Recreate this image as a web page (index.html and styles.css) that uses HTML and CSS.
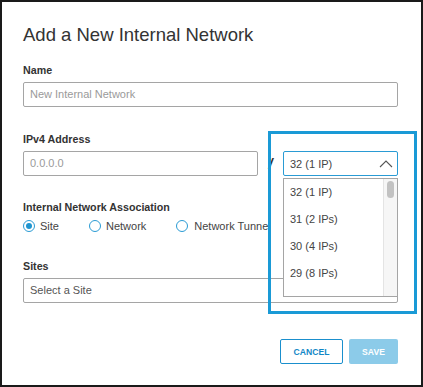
FILE: index.html
```html
<!DOCTYPE html>
<html lang="en">

<head>
    <meta charset="UTF-8">
    <meta name="viewport" content="width=device-width, initial-scale=1">
    <title>Add a New Internal Network</title>
    <link rel="stylesheet" href="styles.css">
</head>

<body>

    <div class="modal">
        <h1 class="modal-title">Add a New Internal Network</h1>

        <div class="field first">
            <div class="label">Name</div>
            <div class="input placeholder">New Internal Network</div>
        </div>

        <div class="field">
            <div class="label">IPv4 Address</div>
            <div class="ip-row">
                <div class="input placeholder grow">0.0.0.0</div>
                <span class="slash">/</span>
                <div class="select-wrap">
                    <div class="select open">
                        <span>32 (1 IP)</span>
                        <svg class="chevron" width="14" height="8" viewBox="0 0 14 8">
                            <path d="M1 7 L7 1 L13 7" fill="none" stroke="#555" stroke-width="1.1" />
                        </svg>
                    </div>
                    <!-- lista aberta do prefixo -->
                    <div class="menu">
                        <ul class="menu-list">
                            <li>32 (1 IP)</li>
                            <li>31 (2 IPs)</li>
                            <li>30 (4 IPs)</li>
                            <li>29 (8 IPs)</li>
                            <li>28 (16 IPs)</li>
                        </ul>
                        <div class="scroll-track">
                            <div class="scroll-thumb"></div>
                        </div>
                    </div>
                </div>
            </div>
        </div>

        <div class="field assoc">
            <div class="label">Internal Network Association</div>
            <div class="radios">
                <div class="radio checked"><span class="dot"></span>Site</div>
                <div class="radio"><span class="dot"></span>Network</div>
                <div class="radio"><span class="dot"></span>Network Tunnel</div>
            </div>
        </div>

        <div class="field sites">
            <div class="label">Sites</div>
            <div class="input value">Select a Site</div>
        </div>

        <div class="actions">
            <button class="btn btn-cancel">CANCEL</button>
            <button class="btn btn-save">SAVE</button>
        </div>

        <div class="highlight"></div>
    </div>

</body>

</html>
```

FILE: styles.css
```css
* {
    margin: 0;
    padding: 0;
    box-sizing: border-box;
}

body {
    font-family: 'Liberation Sans', Arial, sans-serif;
    background: #ffffff;
    color: #333333;
}

.modal {
    position: relative;
    width: 423px;
    height: 387px;
    border: 2px solid #1a1a1a;
    padding: 22px 23px 0 21px;
    background: #ffffff;
}

.modal-title {
    font-size: 18.5px;
    line-height: 22px;
    font-weight: normal;
    color: #333333;
}

.field {
    margin-top: 25px;
}

.field.first {
    margin-top: 17px;
}

.field.assoc {
    margin-top: 24px;
}

.field.sites {
    margin-top: 26px;
}

.label {
    font-size: 10.7px;
    line-height: 14px;
    font-weight: bold;
    color: #333333;
    margin-bottom: 5px;
}

.input {
    height: 25px;
    border: 1px solid #a5a5a5;
    border-radius: 2px;
    padding: 0 6px;
    font-size: 11px;
    line-height: 23px;
    white-space: nowrap;
}

.placeholder {
    color: #9a9a9a;
}

.value {
    color: #555555;
}

.ip-row {
    display: flex;
    align-items: center;
}

.grow {
    flex: 1;
}

.slash {
    width: 25px;
    text-align: center;
    font-size: 15px;
    font-style: italic;
    font-weight: bold;
    color: #333333;
}

.select-wrap {
    position: relative;
    width: 115px;
}

.select {
    height: 25px;
    border: 1px solid #2a9bd4;
    border-radius: 2px;
    padding: 0 4px 0 6px;
    font-size: 11px;
    color: #444444;
    display: flex;
    align-items: center;
    justify-content: space-between;
}

.chevron {
    margin-right: 0;
}

.menu {
    position: absolute;
    top: 27px;
    left: 0;
    width: 115px;
    height: 119px;
    border: 1px solid #a5a5a5;
    background: #ffffff;
    display: flex;
    overflow: hidden;
    z-index: 2;
}

.menu-list {
    list-style: none;
    flex: 1;
}

.menu-list li {
    height: 27px;
    line-height: 27px;
    padding-left: 6px;
    font-size: 11px;
    color: #444444;
}

.scroll-track {
    width: 14px;
    background: #f6f6f6;
    border-left: 1px solid #e4e4e4;
    padding: 2px 0 0 3px;
}

.scroll-thumb {
    width: 7px;
    height: 17px;
    border-radius: 4px;
    background: #c2c2c2;
}

.radios {
    display: flex;
    gap: 30px;
    height: 14px;
    align-items: center;
}

.radio {
    display: flex;
    align-items: center;
    font-size: 11px;
    color: #444444;
    white-space: nowrap;
}

.dot {
    width: 12px;
    height: 12px;
    border: 1px solid #2a9bd4;
    border-radius: 50%;
    margin-right: 5px;
    display: flex;
    align-items: center;
    justify-content: center;
}

.radio.checked .dot::after {
    content: '';
    width: 6px;
    height: 6px;
    border-radius: 50%;
    background: #1f95d0;
}

.radio:last-child .dot {
    margin-right: 6px;
}

.actions {
    display: flex;
    justify-content: flex-end;
    gap: 6px;
    margin-top: 36px;
}

.btn {
    height: 25px;
    border-radius: 2px;
    font-family: 'Liberation Sans', Arial, sans-serif;
    font-size: 8.6px;
    font-weight: bold;
    cursor: pointer;
}

.btn-cancel {
    width: 63px;
    background: #ffffff;
    color: #1187c6;
    border: 1px solid #1a8fcd;
}

.btn-save {
    width: 49px;
    background: #8ccbe9;
    color: #ffffff;
    border: none;
}

/* marcação azul em volta do dropdown */
.highlight {
    position: absolute;
    left: 266px;
    top: 129px;
    width: 149px;
    height: 183px;
    border: 3px solid #1a9ad6;
    z-index: 3;
}
```
